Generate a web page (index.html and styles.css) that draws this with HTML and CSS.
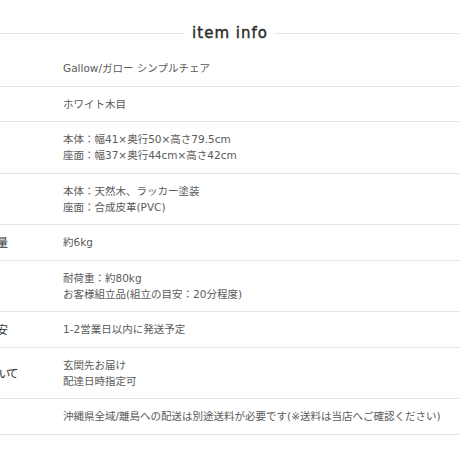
FILE: index.html
```html
<!DOCTYPE html>
<html lang="ja">
<head>
    <meta charset="UTF-8">
    <meta name="viewport" content="width=device-width, initial-scale=1.0">
    <title>item info</title>
    <link rel="stylesheet" href="styles.css">
</head>
<body>
    <section class="item-info">
        <h2 class="item-info-title"><span>item info</span></h2>

        <dl class="spec">
            <div class="spec-row">
                <dt>商品名</dt>
                <dd>Gallow/ガロー シンプルチェア</dd>
            </div>
            <div class="spec-row">
                <dt>カラー</dt>
                <dd>ホワイト木目</dd>
            </div>
            <div class="spec-row">
                <dt>サイズ</dt>
                <dd>本体：幅41×奥行50×高さ79.5cm<br>座面：幅37×奥行44cm×高さ42cm</dd>
            </div>
            <div class="spec-row">
                <dt>素材</dt>
                <dd>本体：天然木、ラッカー塗装<br>座面：合成皮革(PVC)</dd>
            </div>
            <div class="spec-row">
                <dt>本体重量</dt>
                <dd>約6kg</dd>
            </div>
            <div class="spec-row">
                <dt>備考</dt>
                <dd>耐荷重：約80kg<br>お客様組立品(組立の目安：20分程度)</dd>
            </div>
            <div class="spec-row">
                <dt>発送目安</dt>
                <dd>1-2営業日以内に発送予定</dd>
            </div>
            <div class="spec-row">
                <dt class="spec-label-narrow">配送について</dt>
                <dd>玄関先お届け<br>配達日時指定可</dd>
            </div>
            <div class="spec-row">
                <dt>その他</dt>
                <dd>沖縄県全域/離島への配送は別途送料が必要です(※送料は当店へご確認ください)</dd>
            </div>
        </dl>
    </section>
</body>
</html>
```

FILE: styles.css
```css
:root {
    --title-color: #2b2b2b;
    --label-color: #333;
    --text-color: #5a5a5a;
    --line-color: #e4e4e4;
}

html, body {
    overflow: hidden;
}

body {
    margin: 0;
    background: #fff;
    font-family: "DejaVu Sans", "Noto Sans CJK JP", sans-serif;
    color: var(--text-color);
}

.item-info-title {
    display: flex;
    align-items: center;
    gap: 7px;
    margin: 0 0 7px;
    padding-top: 22px;
    height: 22px;
    font-size: 15px;
    font-weight: normal;
    line-height: 22px;
    letter-spacing: 1px;
    color: var(--title-color);
    -webkit-text-stroke: 0.4px var(--title-color);
}

.item-info-title::before,
.item-info-title::after {
    content: "";
    flex: 1;
    height: 1px;
    background: var(--line-color);
}

.spec {
    margin: 0 0 0 -38px;
    width: calc(100% + 38px);
}

.spec-row {
    display: grid;
    grid-template-columns: 101px 1fr;
    align-items: center;
    border-bottom: 1px solid var(--line-color);
}

.spec-row dt {
    font-family: "Noto Sans CJK JP", sans-serif;
    font-feature-settings: "palt";
    font-size: 11.5px;
    color: var(--label-color);
    white-space: nowrap;
}

/* kana set tighter so the long label lines up like the original */
.spec-label-narrow {
    letter-spacing: -2px;
}

.spec-row dd {
    margin: 0;
    padding: 9px 0 9.5px;
    font-size: 10.5px;
    line-height: 16px;
    white-space: nowrap;
}
```
